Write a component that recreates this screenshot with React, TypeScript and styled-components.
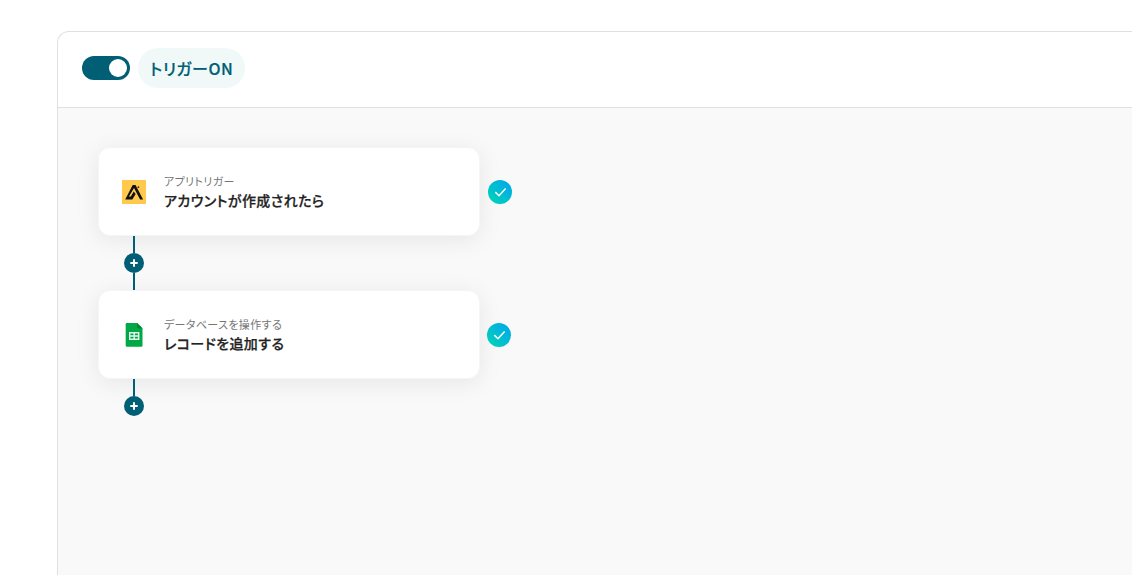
import React from "react";
import styled, { createGlobalStyle } from "styled-components";

const GlobalStyle = createGlobalStyle`
  * {
    box-sizing: border-box;
  }

  body {
    margin: 0;
    background: #fff;
    overflow: hidden;
    font-family: "Noto Sans CJK JP", sans-serif;
    font-feature-settings: "palt";
  }
`;

const Page = styled.div`
  height: 575px;
  padding: 31px 0 0 57px;
  overflow: hidden;
`;

const Panel = styled.main`
  display: flex;
  flex-direction: column;
  height: 560px;
  border: 1px solid #e0e0e0;
  border-right: 0;
  border-radius: 12px 0 0 0;
  overflow: hidden;
`;

const Header = styled.header`
  display: flex;
  align-items: center;
  gap: 8px;
  height: 76px;
  flex-shrink: 0;
  padding: 0 24px 3px;
  border-bottom: 1px solid #e0e0e0;
`;

const Toggle = styled.button`
  display: flex;
  align-items: center;
  justify-content: flex-end;
  width: 48px;
  height: 24px;
  padding: 0 3px;
  border: 0;
  border-radius: 12px;
  background: #005e75;
`;

const Knob = styled.span`
  width: 18px;
  height: 18px;
  border-radius: 50%;
  background: #fff;
`;

const StatusLabel = styled.span`
  display: flex;
  align-items: center;
  width: 107px;
  height: 40px;
  padding-left: 12px;
  border-radius: 20px;
  background: #f0f9f8;
  color: #005e75;
  font-size: 16px;
  font-weight: 500;
  letter-spacing: 0.48px;
  white-space: nowrap;
  -webkit-text-stroke: 0.2px #005e75;
`;

const Canvas = styled.section`
  flex: 1;
  padding: 39px 40px;
  background: #f9f9f9;
`;

const Step = styled.div<{ $gap: number }>`
  display: flex;
  align-items: center;
  gap: ${({ $gap }) => $gap}px;
`;

const Card = styled.div`
  display: flex;
  align-items: center;
  gap: 18px;
  width: 382px;
  height: 89px;
  padding: 0 23px;
  border: 1px solid #f5f5f5;
  border-radius: 12px;
  background: #fff;
  box-shadow: 0 4px 24px rgba(0, 0, 0, 0.08);
`;

const StepText = styled.div`
  display: flex;
  flex-direction: column;
`;

const Category = styled.span`
  color: #757575;
  font-size: 11px;
  line-height: 17px;
  letter-spacing: 0.37px;
`;

const Title = styled.span`
  color: #222;
  font-size: 14px;
  font-weight: 500;
  line-height: 21px;
  letter-spacing: 0.4px;
  -webkit-text-stroke: 0.25px #222;
`;

const Connector = styled.div`
  display: flex;
  flex-direction: column;
  align-items: center;
  width: 20px;
  margin-left: 26px;
`;

const Line = styled.span`
  width: 2px;
  height: 17px;
  background: #005e75;
`;

const AddButton = styled.button`
  display: flex;
  align-items: center;
  justify-content: center;
  width: 20px;
  height: 20px;
  padding: 0;
  border: 0;
  border-radius: 50%;
  background: #005e75;
`;

const CheckBadge = styled.span`
  display: flex;
  width: 24px;
  height: 24px;
  border-radius: 50%;
  background: linear-gradient(45deg, #00d6b4, #00a5ef);
`;

const PlusIcon = () => (
  <svg width="20" height="20" viewBox="0 0 20 20">
    <path d="M10 6.3v7.4M6.3 10h7.4" stroke="#fff" strokeWidth="2" />
  </svg>
);

const CheckIcon = () => (
  <svg width="24" height="24" viewBox="0 0 24 24" fill="none">
    <path d="M7.3 12.1 11 15.7 17.6 8.6" stroke="#fff" strokeWidth="1.5" />
  </svg>
);

const ApolloIcon = () => (
  <svg width="24" height="24" viewBox="0 0 24 24">
    <rect width="24" height="24" fill="#ffc94d" />
    <path
      d="M10.7 5h2.8l7.6 14.4h-3L12 8.1 6.9 16.6h1.9l3-5.2 1.9 2.6-3.4 5.4H3.2z"
      fill="#111"
    />
    <circle cx="16.4" cy="7.2" r="0.9" fill="#3b3010" />
  </svg>
);

const SheetsIcon = () => (
  <svg width="24" height="24" viewBox="0 0 24 24">
    <path
      d="M5 0h10.2L20.5 5.3v17.2q0 1.2-1.2 1.2H5q-1.3 0-1.3-1.2V1.3Q3.7 0 5 0z"
      fill="#00a846"
    />
    <path d="M15 0v4.1q0 1.4 1.4 1.4h4.1z" fill="#00852f" />
    <path
      d="M7.7 9.7h9v6.6h-9zM7.7 13h9M12.2 9.7v6.6"
      fill="none"
      stroke="#e9f8ee"
      strokeWidth="1.4"
    />
  </svg>
);

const STEPS = [
  {
    category: "アプリトリガー",
    title: "アカウントが作成されたら",
    Icon: ApolloIcon,
    gap: 8,
    last: false,
  },
  {
    category: "データベースを操作する",
    title: "レコードを追加する",
    Icon: SheetsIcon,
    gap: 7,
    last: true,
  },
];

const App = () => {
  return (
    <>
      <GlobalStyle />
      <Page>
        <Panel>
          <Header>
            <Toggle>
              <Knob />
            </Toggle>
            <StatusLabel>トリガーON</StatusLabel>
          </Header>
          <Canvas>
            {STEPS.map(({ category, title, Icon, gap, last }) => (
              <React.Fragment key={title}>
                <Step $gap={gap}>
                  <Card>
                    <Icon />
                    <StepText>
                      <Category>{category}</Category>
                      <Title>{title}</Title>
                    </StepText>
                  </Card>
                  <CheckBadge>
                    <CheckIcon />
                  </CheckBadge>
                </Step>
                <Connector>
                  <Line />
                  <AddButton>
                    <PlusIcon />
                  </AddButton>
                  {!last && <Line />}
                </Connector>
              </React.Fragment>
            ))}
          </Canvas>
        </Panel>
      </Page>
    </>
  );
};

export default App;
